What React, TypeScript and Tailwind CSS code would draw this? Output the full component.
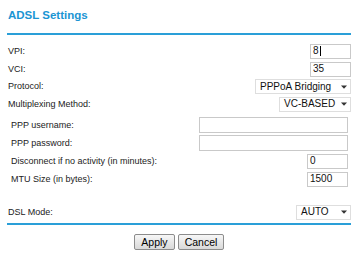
import React from 'react';

const Label = ({ children }: { children: React.ReactNode }) => (
  <span className="text-[9px] leading-none text-[#222]">{children}</span>
);

const TextBox = ({ value, width, height = 15, caret }: { value?: string; width: string; height?: number; caret?: boolean }) => (
  <div
    className={`${width} flex items-center border border-[#c9c9c9] bg-white px-[2px] text-[10px] leading-none text-[#111]`}
    style={{ height }}
  >
    {value}
    {caret && <span className="ml-[1px] inline-block h-[10px] w-px bg-black" />}
  </div>
);

const Select = ({ value, width }: { value: string; width: string }) => (
  <div className={`${width} flex h-[15px] items-center justify-between border border-[#dedede] bg-white pl-[4px] pr-[3px] text-[10px] leading-none text-[#111]`}>
    <span>{value}</span>
    <svg width="6" height="4" viewBox="0 0 6 4">
      <path d="M0 0.5h6L3 3.8z" fill="#333" />
    </svg>
  </div>
);

const Row = ({ children, h = 'h-[18px]', inset = false }: { children: React.ReactNode; h?: string; inset?: boolean }) => (
  <div className={`flex ${h} items-center justify-between ${inset ? 'pl-[4px] pr-[3px]' : 'pl-[1px]'}`}>
    {children}
  </div>
);

export default function App() {
  return (
    <div className="h-[257px] w-[360px] bg-white font-['Liberation_Sans',Arial,sans-serif]">
      <div className="ml-[7px] w-[344px] pt-[9px]">
        <h1 className="pl-[1px] text-[11.5px] font-bold leading-[13px] text-[#1b95d3]">ADSL Settings</h1>
        <div className="mt-[11px] h-[2px] bg-[#2a9fd8]" />

        <div className="mt-[7px]">
          <Row>
            <Label>VPI:</Label>
            <TextBox value="8" width="w-[41px]" caret />
          </Row>
          <Row>
            <Label>VCI:</Label>
            <TextBox value="35" width="w-[41px]" />
          </Row>
          <Row h="h-[17px]">
            <Label>Protocol:</Label>
            <Select value="PPPoA Bridging" width="w-[96px]" />
          </Row>
          <Row>
            <Label>Multiplexing Method:</Label>
            <Select value="VC-BASED" width="w-[72px]" />
          </Row>
        </div>

        <div className="mt-[3px]">
          <Row inset>
            <Label>PPP username:</Label>
            <TextBox width="w-[149px]" height={16} />
          </Row>
          <Row inset>
            <Label>PPP password:</Label>
            <TextBox width="w-[149px]" height={16} />
          </Row>
          <Row inset>
            <Label>Disconnect if no activity (in minutes):</Label>
            <TextBox value="0" width="w-[41px]" />
          </Row>
          <Row inset>
            <Label>MTU Size (in bytes):</Label>
            <TextBox value="1500" width="w-[41px]" />
          </Row>
        </div>

        <div className="mt-[15px]">
          <Row>
            <Label>DSL Mode:</Label>
            <Select value="AUTO" width="w-[55px]" />
          </Row>
        </div>

        <div className="mt-[2px] h-[2px] bg-[#2a9fd8]" />

        <div className="mt-[9px] flex justify-center gap-[3px]">
          <button className="h-[16px] w-[41px] rounded-[2px] border border-[#8c8c8c] bg-gradient-to-b from-[#f7f7f7] to-[#d9d9d9] text-[10.5px] leading-none text-black">
            Apply
          </button>
          <button className="h-[16px] w-[46px] rounded-[2px] border border-[#8c8c8c] bg-gradient-to-b from-[#f7f7f7] to-[#d9d9d9] text-[10.5px] leading-none text-black">
            Cancel
          </button>
        </div>
      </div>
    </div>
  );
}
